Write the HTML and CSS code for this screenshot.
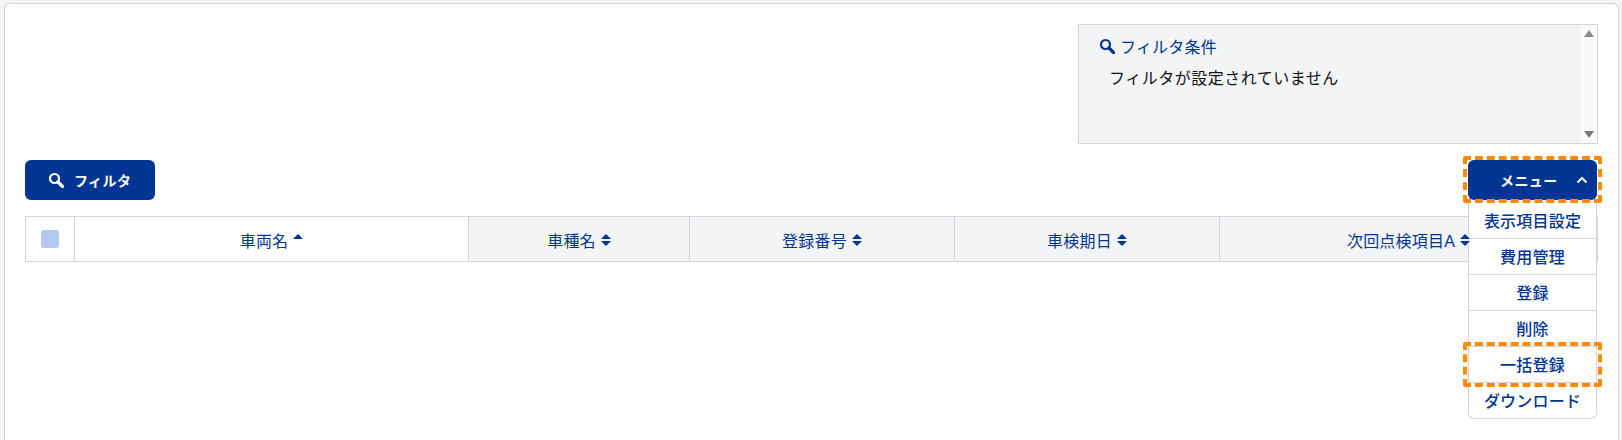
FILE: index.html
```html
<!doctype html>
<html lang="ja">
  <head>
    <meta charset="UTF-8" />
    <title>車両一覧</title>
    <link rel="stylesheet" href="styles.css">
  </head>
  <body>
    <svg class="icon-defs" width="0" height="0">
      <symbol id="search" viewBox="0 0 16 16">
        <circle cx="6.5" cy="6.5" r="4.5" fill="none" stroke="currentColor" stroke-width="2.2" />
        <path d="M10 10l4.5 4.5" fill="none" stroke="currentColor" stroke-width="3.2" stroke-linecap="round" />
      </symbol>
    </svg>

    <div class="panel">
      <div class="filter-row">
        <div class="filter-box">
          <div class="filter-body">
            <div class="filter-title">
              <svg class="icon-small"><use href="#search" /></svg>
              <span>フィルタ条件</span>
            </div>
            <p class="filter-text">フィルタが設定されていません</p>
          </div>
          <div class="scrollbar">
            <span class="arrow-up"></span>
            <span class="arrow-down"></span>
          </div>
        </div>
      </div>

      <div class="toolbar">
        <button class="btn btn-filter">
          <svg class="icon-btn"><use href="#search" /></svg>
          <span>フィルタ</span>
        </button>

        <div class="menu-wrap">
          <button class="btn btn-menu">
            <span>メニュー</span>
            <svg class="chevron" viewBox="0 0 12 8"><path d="M1.5 6.5L6 2l4.5 4.5" fill="none" stroke="currentColor" stroke-width="2" /></svg>
          </button>
          <div class="highlight"></div>
          <ul class="menu">
            <li>表示項目設定</li>
            <li>費用管理</li>
            <li>登録</li>
            <li>削除</li>
            <li>一括登録<div class="highlight highlight-item"></div></li>
            <li>ダウンロード</li>
          </ul>
        </div>
      </div>

      <div class="table">
        <div class="cell cell-check"><span class="checkbox"></span></div>
        <div class="cell cell-active">車両名<span class="sort sort-asc"></span></div>
        <div class="cell">車種名<span class="sort"></span></div>
        <div class="cell">登録番号<span class="sort"></span></div>
        <div class="cell">車検期日<span class="sort"></span></div>
        <div class="cell">次回点検項目A<span class="sort"></span></div>
      </div>
    </div>
  </body>
</html>
```

FILE: styles.css
```css
* {
  box-sizing: border-box;
}
html,
body {
  height: 100%;
}
body {
  margin: 0;
  padding: 3px 3px 0 4px;
  overflow: hidden;
  background-color: #f3f4f6;
  font-family: "Liberation Sans", "Noto Sans CJK JP", sans-serif;
  font-size: 16px;
  letter-spacing: 0.2px;
  color: #003594;
}
.icon-defs {
  position: absolute;
}
.panel {
  height: 437px;
  padding: 20px;
  background: white;
  border: 1px solid #d1d5db;
  border-bottom: none;
  border-radius: 6px 6px 0 0;
}
.filter-row {
  display: flex;
  justify-content: flex-end;
  height: 120px;
}
.filter-box {
  display: flex;
  width: 520px;
  background: #f3f4f6;
  border: 1px solid #d1d5db;
}
.filter-body {
  flex: 1;
  padding: 11px 20px;
}
.filter-title {
  display: flex;
  align-items: center;
  gap: 5px;
  height: 20px;
}
.icon-small {
  width: 16px;
  height: 16px;
}
.filter-text {
  margin: 13px 0 0 10px;
  color: #111;
  line-height: 20px;
  letter-spacing: 0.5px;
}
.scrollbar {
  display: flex;
  flex-direction: column;
  justify-content: space-between;
  align-items: center;
  width: 16px;
  padding: 5px 0;
  background: #fafafa;
}
.arrow-up,
.arrow-down {
  width: 0;
  height: 0;
  border-left: 5px solid transparent;
  border-right: 5px solid transparent;
}
.arrow-up {
  border-bottom: 7px solid #8a8a8a;
}
.arrow-down {
  border-top: 7px solid #7a7a7a;
}
.toolbar {
  display: flex;
  justify-content: space-between;
  margin-top: 16px;
  height: 40px;
}
.btn {
  display: flex;
  align-items: center;
  height: 40px;
  border: none;
  border-radius: 6px;
  background: #003594;
  color: white;
  font: inherit;
  font-size: 14px;
  font-weight: bold;
  letter-spacing: 0.4px;
}
.btn-filter {
  width: 130px;
  padding: 0 0 0 23px;
  gap: 10px;
}
.icon-btn {
  width: 16px;
  height: 16px;
}
.menu-wrap {
  position: relative;
  width: 129px;
  margin-right: 1px;
}
.btn-menu {
  width: 129px;
  padding: 0 9px 0 32px;
  justify-content: space-between;
}
.chevron {
  width: 12px;
  height: 8px;
}
.highlight {
  position: absolute;
  top: -4px;
  right: -5px;
  bottom: -3px;
  left: -5px;
  border: 4px dashed #ff8a00;
  border-radius: 3px;
  pointer-events: none;
}
.highlight-item {
  top: -5px;
  right: -6px;
  bottom: -5px;
  left: -6px;
}
.menu {
  position: absolute;
  top: 43px;
  left: 0;
  right: 0;
  margin: 0;
  padding: 0;
  list-style: none;
  background: white;
  border: 1px solid #d1d5db;
  border-top: none;
  border-radius: 0 0 6px 6px;
}
.menu li {
  position: relative;
  height: 36px;
  padding-top: 1px;
  line-height: 36px;
  text-align: center;
  font-weight: 500;
  border-bottom: 1px solid #d1d5db;
}
.menu li:last-child {
  height: 35px;
  border-bottom: none;
}
.table {
  display: grid;
  grid-template-columns: 48px 394px 221px 265px 265px 1fr;
  margin-top: 16px;
  height: 46px;
  border: 1px solid #d1d5db;
  background: #f3f4f6;
}
.cell {
  display: flex;
  align-items: center;
  justify-content: center;
  gap: 5px;
  padding-top: 1px;
  border-left: 1px solid #d1d5db;
}
.cell-check {
  padding-top: 0;
  border-left: none;
  background: white;
}
.cell-active {
  background: white;
}
.checkbox {
  width: 18px;
  height: 18px;
  background: #b2c8ee;
  border-radius: 3px;
}
.sort {
  position: relative;
  width: 10px;
  height: 12px;
}
.sort::before,
.sort::after {
  content: "";
  position: absolute;
  left: 0;
  border-left: 5px solid transparent;
  border-right: 5px solid transparent;
}
.sort::before {
  top: 0;
  border-bottom: 5px solid #003594;
}
.sort::after {
  bottom: 0;
  border-top: 5px solid #003594;
}
.sort-asc::after {
  display: none;
}
```
